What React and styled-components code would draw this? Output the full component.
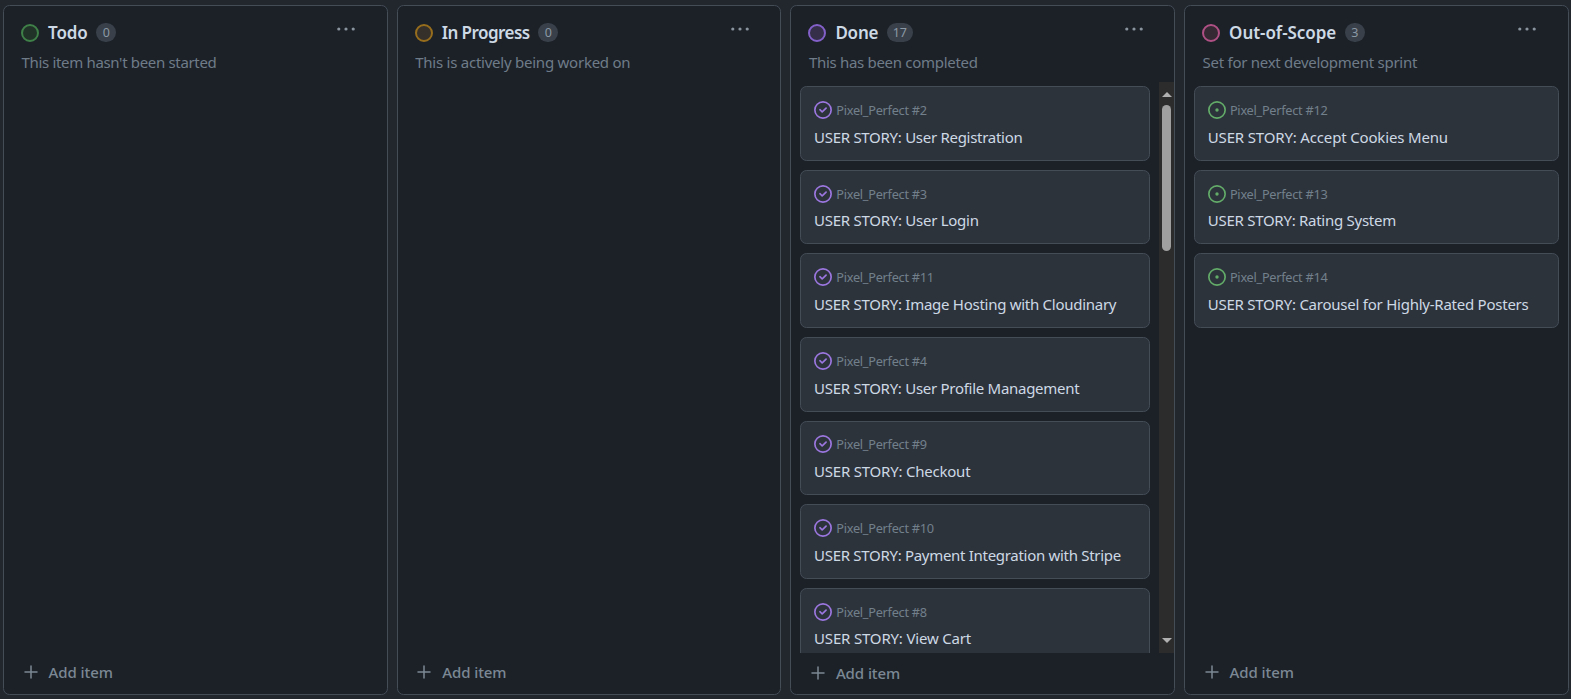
import React from 'react';
import styled, { createGlobalStyle } from 'styled-components';

const GlobalStyle = createGlobalStyle`
  * { box-sizing: border-box; }
  body {
    margin: 0;
    background: #22272e;
    font-family: "Noto Sans", "Open Sans", sans-serif;
    overflow: hidden;
  }
`;

const Board = styled.main`
  display: flex;
  gap: 9px;
  width: 1571px;
  height: 699px;
  padding: 5px 2px 4px 3px;
`;

const ColumnFrame = styled.section`
  flex: 0 0 384.7px;
  display: flex;
  flex-direction: column;
  border: 1px solid #444c56;
  border-radius: 6.5px;
  background: #1c2128;
  overflow: hidden;
`;

const Header = styled.header`
  height: 76px;
  padding: 13px 17px 0 17px;
`;

const TitleRow = styled.div`
  display: flex;
  align-items: center;
  height: 27px;
`;

const StatusRing = styled.span`
  width: 18px;
  height: 18px;
  border: 2px solid ${(p) => p.$ring};
  border-radius: 50%;
  background: ${(p) => p.$fill};
`;

const Title = styled.h2`
  margin: 0 8.5px 0 9px;
  font-size: 17px;
  font-weight: 600;
  line-height: 27px;
  letter-spacing: ${(p) => p.$track}px;
  white-space: nowrap;
  color: #cdd9e5;
`;

const Counter = styled.span`
  min-width: 20px;
  height: 19px;
  padding: 0 6px;
  border-radius: 10px;
  background: #394049;
  color: #8b98a5;
  font-size: 12.5px;
  line-height: 20px;
  letter-spacing: -0.3px;
  text-align: center;
`;

const MenuButton = styled.button`
  align-self: flex-start;
  margin: 6px 13.5px 0 auto;
  padding: 0;
  width: 20px;
  height: 8px;
  border: 0;
  background: none;
  color: #8a949e;
  svg { display: block; }
`;

const Description = styled.p`
  margin: 4px 0 0 0.5px;
  font-size: 15px;
  line-height: 24px;
  letter-spacing: ${(p) => p.$track}px;
  white-space: nowrap;
  color: #6f7c88;
`;

const Body = styled.div`
  flex: 1;
  min-height: 0;
  display: flex;
  overflow: hidden;
`;

const CardList = styled.div`
  flex: 1;
  min-width: 0;
  display: flex;
  flex-direction: column;
  gap: 9px;
  padding: 4.3px 9px 0;
`;

const CardFrame = styled.article`
  flex: 0 0 74.6px;
  padding: 12.8px 13px 0 12.7px;
  border: 1px solid #444c56;
  border-radius: 6.5px;
  background: #2d333b;
`;

const CardMeta = styled.div`
  display: flex;
  align-items: center;
  gap: 4.2px;
  height: 20px;
  font-size: 12.75px;
  letter-spacing: -0.28px;
  line-height: 20px;
  color: #72808c;
  svg { display: block; flex: none; }
`;

const CardTitle = styled.h3`
  margin: 4.8px 0 0;
  font-size: 15px;
  font-weight: 400;
  line-height: 24px;
  letter-spacing: ${(p) => p.$track}px;
  white-space: nowrap;
  color: #cdd9e5;
`;

const ScrollTrack = styled.div`
  flex: 0 0 15px;
  display: flex;
  flex-direction: column;
  align-items: center;
  padding: 10px 0;
  background: #2c2c2c;
`;

const ScrollArrow = styled.span`
  border: 5px solid transparent;
  border-top-width: ${(p) => (p.$up ? 0 : 5)}px;
  border-bottom-width: ${(p) => (p.$up ? 5 : 0)}px;
  border-top-color: ${(p) => (p.$up ? 'transparent' : '#b0b0b0')};
  border-bottom-color: ${(p) => (p.$up ? '#b0b0b0' : 'transparent')};
`;

const ScrollThumb = styled.span`
  width: 9px;
  height: 146px;
  margin: 8px 0 auto;
  border-radius: 4.5px;
  background: #9f9f9f;
`;

const AddItem = styled.button`
  flex: 0 0 41px;
  display: flex;
  align-items: center;
  gap: 9px;
  padding: 0 0 ${(p) => (p.$scrolls ? 1 : 3)}px 17.5px;
  border: 0;
  background: none;
  color: #7b8894;
  font: 500 15px/24px "Noto Sans", "Open Sans", sans-serif;
  letter-spacing: -0.08px;
  text-align: left;
`;

const DoneIcon = () => (
  <svg width="18" height="18" viewBox="0 0 16 16" fill="#9a76de">
    <path d="M11.28 6.78a.75.75 0 0 0-1.06-1.06L7.25 8.69 5.78 7.22a.75.75 0 0 0-1.06 1.06l2 2a.75.75 0 0 0 1.06 0l3.5-3.5Z" />
    <path d="M16 8A8 8 0 1 1 0 8a8 8 0 0 1 16 0Zm-1.5 0a6.5 6.5 0 1 0-13 0 6.5 6.5 0 0 0 13 0Z" />
  </svg>
);

const OpenIcon = () => (
  <svg width="18" height="18" viewBox="0 0 16 16" fill="#62ab68">
    <path d="M8 9.5a1.5 1.5 0 1 0 0-3 1.5 1.5 0 0 0 0 3Z" />
    <path d="M8 0a8 8 0 1 1 0 16A8 8 0 0 1 8 0ZM1.5 8a6.5 6.5 0 1 0 13 0 6.5 6.5 0 0 0-13 0Z" />
  </svg>
);

const DotsIcon = () => (
  <svg width="20" height="8" viewBox="0 0 20 8" fill="currentColor">
    <circle cx="2.8" cy="4" r="1.6" />
    <circle cx="10" cy="4" r="1.6" />
    <circle cx="17.2" cy="4" r="1.6" />
  </svg>
);

const PlusIcon = () => (
  <svg width="18" height="18" viewBox="0 0 18 18" stroke="currentColor" strokeWidth="1.5" strokeLinecap="round">
    <path d="M9 3v12M3 9h12" />
  </svg>
);

const columns = [
  {
    title: 'Todo', titleTrack: -0.1, count: 0, ring: '#3f7f48', fill: '#213328',
    description: "This item hasn't been started", track: -0.33, cards: [],
  },
  {
    title: 'In Progress', titleTrack: -0.55, count: 0, ring: '#966d1c', fill: '#35302a',
    description: 'This is actively being worked on', track: -0.24, cards: [],
  },
  {
    title: 'Done', titleTrack: -0.2, count: 17, ring: '#8260c8', fill: '#352f4a',
    description: 'This has been completed', track: -0.3, scrolls: true,
    cards: [
      { id: 2, title: 'User Registration', track: -0.285 },
      { id: 3, title: 'User Login', track: -0.27 },
      { id: 11, title: 'Image Hosting with Cloudinary', track: -0.27 },
      { id: 4, title: 'User Profile Management', track: -0.28 },
      { id: 9, title: 'Checkout', track: -0.22 },
      { id: 10, title: 'Payment Integration with Stripe', track: -0.3 },
      { id: 8, title: 'View Cart', track: -0.18 },
    ],
  },
  {
    title: 'Out-of-Scope', titleTrack: -0.05, count: 3, ring: '#ae5084', fill: '#352933',
    description: 'Set for next development sprint', track: -0.27, open: true,
    cards: [
      { id: 12, title: 'Accept Cookies Menu', track: -0.16 },
      { id: 13, title: 'Rating System', track: -0.27 },
      { id: 14, title: 'Carousel for Highly-Rated Posters', track: -0.24 },
    ],
  },
];

function Card({ card, open }) {
  return (
    <CardFrame>
      <CardMeta>
        {open ? <OpenIcon /> : <DoneIcon />}
        <span>Pixel_Perfect #{card.id}</span>
      </CardMeta>
      <CardTitle $track={card.track}>USER STORY: {card.title}</CardTitle>
    </CardFrame>
  );
}

function Column({ column }) {
  return (
    <ColumnFrame>
      <Header>
        <TitleRow>
          <StatusRing $ring={column.ring} $fill={column.fill} />
          <Title $track={column.titleTrack}>{column.title}</Title>
          <Counter>{column.count}</Counter>
          <MenuButton aria-label="Column options"><DotsIcon /></MenuButton>
        </TitleRow>
        <Description $track={column.track}>{column.description}</Description>
      </Header>
      <Body>
        <CardList>
          {column.cards.map((card) => <Card key={card.id} card={card} open={column.open} />)}
        </CardList>
        {column.scrolls && (
          <ScrollTrack>
            <ScrollArrow $up />
            <ScrollThumb />
            <ScrollArrow />
          </ScrollTrack>
        )}
      </Body>
      <AddItem $scrolls={column.scrolls}><PlusIcon />Add item</AddItem>
    </ColumnFrame>
  );
}

export default function App() {
  return (
    <>
      <GlobalStyle />
      <Board>
        {columns.map((column) => <Column key={column.title} column={column} />)}
      </Board>
    </>
  );
}
